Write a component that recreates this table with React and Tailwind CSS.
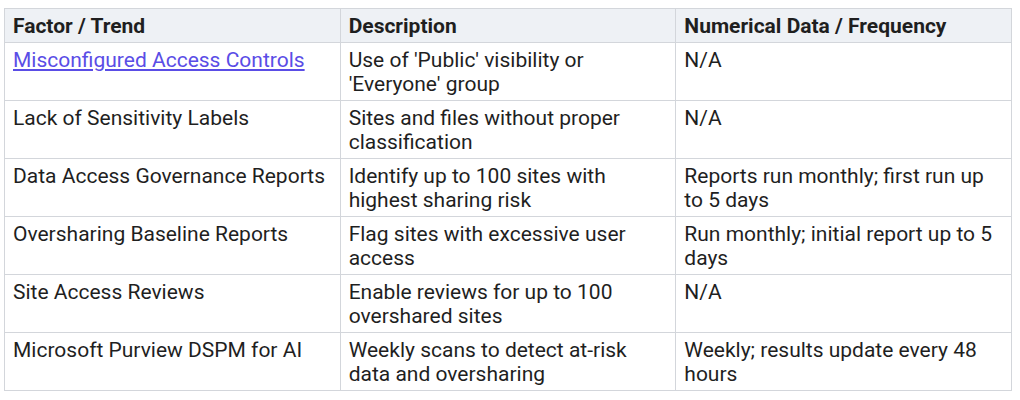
export default function App() {
  const rows = [
    ["Misconfigured Access Controls", "Use of 'Public' visibility or 'Everyone' group", "N/A", true],
    ["Lack of Sensitivity Labels", "Sites and files without proper classification", "N/A"],
    ["Data Access Governance Reports", "Identify up to 100 sites with highest sharing risk", "Reports run monthly; first run up to 5 days"],
    ["Oversharing Baseline Reports", "Flag sites with excessive user access", "Run monthly; initial report up to 5 days"],
    ["Site Access Reviews", "Enable reviews for up to 100 overshared sites", "N/A"],
    ["Microsoft Purview DSPM for AI", "Weekly scans to detect at-risk data and oversharing", "Weekly; results update every 48 hours"],
  ];
  return (
    <div className="bg-white w-[1020px] h-[400px] pt-[8px] pl-[4px]" style={{ fontFamily: "Roboto, sans-serif" }}>
      <table className="w-[1008px] table-fixed border-collapse text-[21px] leading-[24px] text-[#1f1f1f]">
        <thead>
          <tr className="bg-[#eef1f5]">
            {["Factor / Trend", "Description", "Numerical Data / Frequency"].map((h) => (
              <th key={h} className="border border-[#d3d6db] px-[8px] pt-[5px] pb-[4px] text-left font-bold">{h}</th>
            ))}
          </tr>
        </thead>
        <tbody>
          {rows.map((r, i) => (
            <tr key={i} className="h-[58px]">
              <td className="border border-[#d3d6db] px-[8px] pt-[5px] pb-[4px] align-top">
                {r[3] ? <a href="#" className="text-[#5a4de6] underline">{r[0]}</a> : r[0]}
              </td>
              <td className="border border-[#d3d6db] px-[8px] pt-[5px] pb-[4px] align-top">{r[1]}</td>
              <td className="border border-[#d3d6db] px-[8px] pt-[5px] pb-[4px] align-top">{r[2]}</td>
            </tr>
          ))}
        </tbody>
      </table>
    </div>
  );
}
